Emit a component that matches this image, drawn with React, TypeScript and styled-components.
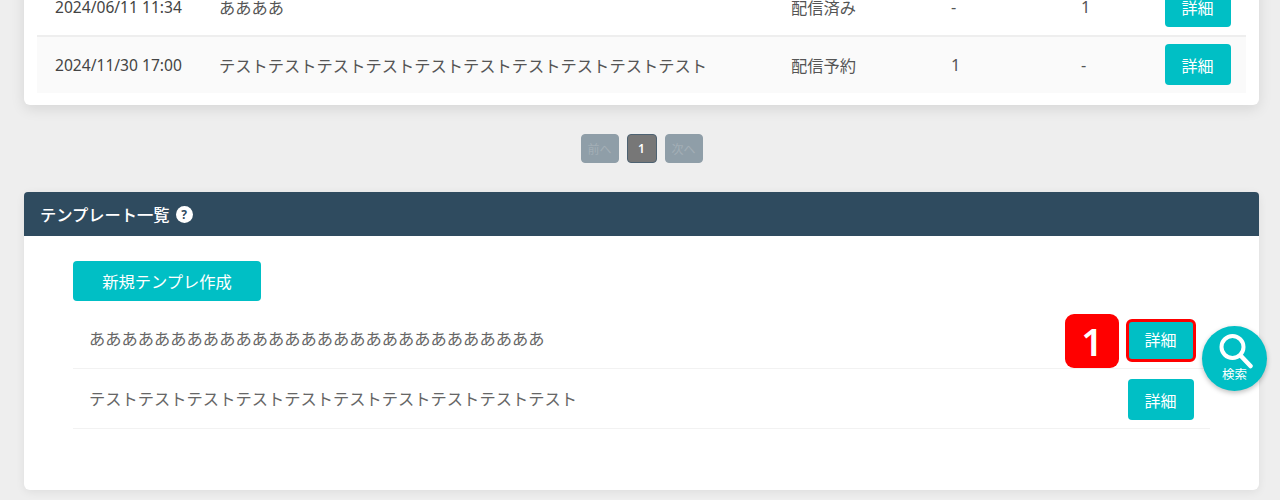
import React from "react"
import styled, { createGlobalStyle } from "styled-components"

const GlobalStyle = createGlobalStyle`
  html, body {
    margin: 0;
    height: 100%;
    overflow: hidden;
    background: #eeeeee;
  }
  body {
    font-family: "Noto Sans", "Noto Sans CJK JP", sans-serif;
    color: #4a4a4a;
  }
`

const deliveries = [
  { date: "2024/06/11 11:34", title: "ああああ", status: "配信済み", reserved: "-", sent: "1" },
  {
    date: "2024/11/30 17:00",
    title: "テストテストテストテストテストテストテストテストテストテスト",
    status: "配信予約",
    reserved: "1",
    sent: "-",
  },
]

const templates = [
  { title: "あ".repeat(28), marked: true },
  { title: "テスト".repeat(10), marked: false },
]

export default function App() {
  return (
    <Page>
      <GlobalStyle />
      <DeliveryCard>
        {deliveries.map((d, i) => (
          <DeliveryRow key={d.date} striped={i % 2 === 1}>
            <DateCell>{d.date}</DateCell>
            <Cell>{d.title}</Cell>
            <Cell>{d.status}</Cell>
            <Cell>{d.reserved}</Cell>
            <Cell>{d.sent}</Cell>
            <DetailButton>詳細</DetailButton>
          </DeliveryRow>
        ))}
      </DeliveryCard>

      <Pager>
        <PageButton>前へ</PageButton>
        <PageButton current>1</PageButton>
        <PageButton>次へ</PageButton>
      </Pager>

      <Section>
        <SectionHeader>
          テンプレート一覧
          <HelpBadge>?</HelpBadge>
        </SectionHeader>
        <SectionBody>
          <NewButton>新規テンプレ作成</NewButton>
          <TemplateList>
            {templates.map(t => (
              <TemplateRow key={t.title}>
                <TemplateTitle>{t.title}</TemplateTitle>
                <ButtonSlot>
                  {t.marked && <StepBadge>1</StepBadge>}
                  <DetailButton marked={t.marked}>詳細</DetailButton>
                </ButtonSlot>
              </TemplateRow>
            ))}
          </TemplateList>
        </SectionBody>
      </Section>

      <SearchFab>
        <svg width="36" height="36" viewBox="0 0 36 36" fill="none" stroke="#fff" strokeLinecap="round">
          <circle cx="15.5" cy="13" r="11" strokeWidth="4" />
          <path d="M24 22l9.5 10" strokeWidth="4.5" />
        </svg>
        <span>検索</span>
      </SearchFab>
    </Page>
  )
}

const Page = styled.div`
  position: relative;
  margin-top: -21px;
  padding: 0 21px 0 24px;
`

const DeliveryCard = styled.div`
  background: #fff;
  border-radius: 0 0 6px 6px;
  box-shadow: 0 4px 14px rgba(0, 0, 0, 0.1);
  padding: 0 13px 12px;
`

const DeliveryRow = styled.div<{ striped?: boolean }>`
  display: grid;
  grid-template-columns: 164px 572px 160px 130px 84px 66px;
  align-items: center;
  height: 55px;
  padding: 0 15px 1px 18px;
  background: ${props => (props.striped ? "#fafafa" : "#fff")};
  border-top: ${props => (props.striped ? "2px solid #eeeeee" : "none")};
`

const Cell = styled.div`
  font-size: 16.27px;
  color: #555;
  white-space: nowrap;
`

const DateCell = styled.div`
  font-size: 15.6px;
  color: #444;
  white-space: nowrap;
`

const DetailButton = styled.button<{ marked?: boolean }>`
  width: 66px;
  height: ${props => (props.marked ? "39px" : "41px")};
  margin-top: ${props => (props.marked ? "2px" : "0")};
  padding: 0 1px ${props => (props.marked ? "3px" : "0")} 0;
  border: none;
  border-radius: 4px;
  background: #00bfc5;
  color: #fff;
  font: inherit;
  font-size: 16px;
  outline: ${props => (props.marked ? "3px solid #f00" : "none")};
  outline-offset: -1px;
`

const Pager = styled.div`
  display: flex;
  justify-content: center;
  gap: 8px;
  margin: 29px 0 29px;
`

const PageButton = styled.div<{ current?: boolean }>`
  display: flex;
  align-items: center;
  justify-content: center;
  height: 29px;
  width: ${props => (props.current ? "30px" : "38px")};
  box-sizing: border-box;
  border-radius: 4px;
  font-size: 12px;
  font-weight: ${props => (props.current ? 600 : 400)};
  background: ${props => (props.current ? "#777" : "#8f9ea8")};
  border: 1px solid ${props => (props.current ? "#4d6272" : "#8f9ea8")};
  color: ${props => (props.current ? "#fff" : "#a3aeb6")};
`

const Section = styled.div`
  border-radius: 6px;
  background: #fff;
  box-shadow: 0 2px 10px rgba(0, 0, 0, 0.07);
`

const SectionHeader = styled.div`
  display: flex;
  align-items: center;
  gap: 6px;
  height: 44px;
  padding: 0 16px;
  background: #2f4b5f;
  border-radius: 4px 4px 0 0;
  color: #fff;
  font-size: 16.27px;
  font-weight: 500;
`

const HelpBadge = styled.span`
  display: flex;
  align-items: center;
  justify-content: center;
  width: 17px;
  height: 17px;
  border-radius: 50%;
  background: #fff;
  color: #2f4b5f;
  font-size: 12px;
  font-weight: 700;
`

const SectionBody = styled.div`
  padding: 25px 49px 61px;
`

const NewButton = styled.button`
  display: block;
  width: 188px;
  height: 40px;
  padding: 0;
  border: none;
  border-radius: 4px;
  background: #00bfc5;
  color: #fff;
  font: inherit;
  font-size: 16.27px;
`

const TemplateList = styled.div`
  margin-top: 8px;
`

const TemplateRow = styled.div`
  display: flex;
  align-items: center;
  justify-content: space-between;
  height: 59px;
  padding: 0 16px;
  border-bottom: 1px solid #f2f2f2;
`

const TemplateTitle = styled.div`
  margin-top: -2px;
  font-size: 16.27px;
  color: #666;
  white-space: nowrap;
`

const ButtonSlot = styled.div`
  position: relative;
  display: flex;
  margin-top: 2px;
`

const StepBadge = styled.div`
  position: absolute;
  right: 75px;
  top: -5px;
  display: flex;
  align-items: center;
  justify-content: center;
  width: 54px;
  height: 54px;
  border-radius: 9px;
  background: #f00;
  color: #fff;
  font-size: 38px;
  font-weight: 600;
`

const SearchFab = styled.div`
  position: absolute;
  left: 1202px;
  top: 347px;
  display: flex;
  flex-direction: column;
  align-items: center;
  width: 65px;
  height: 65px;
  padding-top: 8px;
  box-sizing: border-box;
  border-radius: 50%;
  background: #00bfc5;
  box-shadow: 0 2px 5px rgba(0, 0, 0, 0.25);
  color: #fff;
  font-size: 12.5px;
  line-height: 12px;

  svg {
    margin-bottom: -1px;
  }
`
